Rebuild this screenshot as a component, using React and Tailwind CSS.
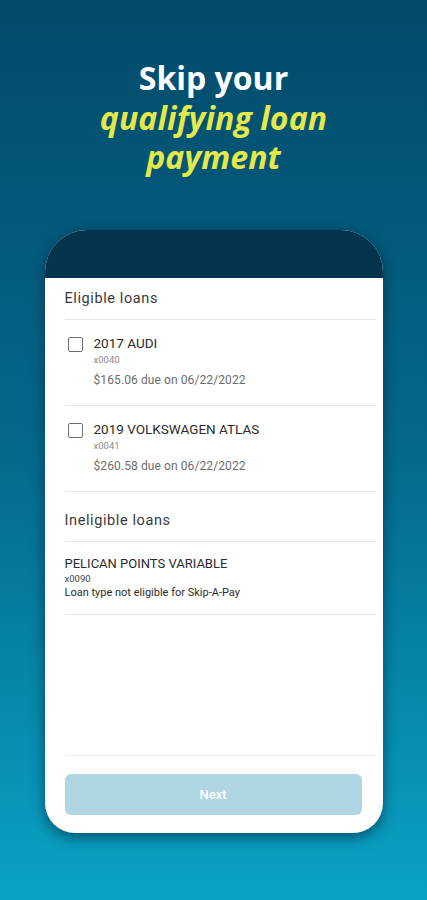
import React from "react";

const eligible = [
  { name: "2017 AUDI", acct: "x0040", due: "$165.06 due on 06/22/2022" },
  { name: "2019 VOLKSWAGEN ATLAS", acct: "x0041", due: "$260.58 due on 06/22/2022" },
];

const LoanRow = ({ loan }) => (
  <div className="flex border-b border-[#e6e6e6] pt-[15px] pb-[17px]">
    <div className="ml-[3px] mt-[2px] h-[15px] w-[15px] shrink-0 rounded-[2px] border-[1.5px] border-[#6f6f6f] bg-white" />
    <div className="ml-[11px] flex flex-col">
      <span className="text-[13.5px] leading-[16px] text-[#2b2b2b]">{loan.name}</span>
      <span className="mt-[3px] text-[9.5px] leading-[12px] text-[#8a8a8a]">{loan.acct}</span>
      <span className="mt-[6px] text-[12px] leading-[16px] tracking-[0.1px] text-[#6d6d6d]">{loan.due}</span>
    </div>
  </div>
);

export default function App() {
  return (
    <div className="flex h-[900px] w-[427px] flex-col items-center overflow-hidden bg-gradient-to-b from-[#034a6a] via-[#04698c] to-[#0aa3c6] font-['Roboto',sans-serif]">
      <div className="mt-[58px] flex flex-col items-center font-['Open_Sans',sans-serif] font-bold">
        <span className="text-[32px] leading-[40px] tracking-[0px] text-white">Skip your</span>
        <span className="text-[32px] italic leading-[40px] tracking-[0.1px] text-[#e4e84a]">qualifying loan</span>
        <span className="text-[32px] italic leading-[37px] tracking-[0.1px] text-[#e4e84a]">payment</span>
      </div>

      <div className="mt-[55px] flex w-[338px] flex-col overflow-hidden rounded-t-[42px] rounded-b-[30px] bg-white shadow-[0_4px_14px_rgba(0,20,40,0.55)]">
        <div className="h-[48px] bg-[#04344d]" />
        <div className="flex h-[555px] flex-col pl-[20px] pr-[7px]">
          <div className="border-b border-[#e6e6e6] pt-[12px] pb-[11px] text-[14.5px] leading-[18px] tracking-[0.6px] text-[#3a3a3a]">
            Eligible loans
          </div>
          {eligible.map((loan) => (
            <LoanRow key={loan.acct} loan={loan} />
          ))}
          <div className="border-b border-[#e6e6e6] pt-[20px] pb-[11px] text-[14.5px] leading-[18px] tracking-[0.6px] text-[#3a3a3a]">
            Ineligible loans
          </div>
          <div className="flex flex-col border-b border-[#e6e6e6] pt-[14px] pb-[14px]">
            <span className="text-[13px] leading-[16px] text-[#2b2b2b]">PELICAN POINTS VARIABLE</span>
            <span className="text-[9.5px] leading-[13px] text-[#444]">x0090</span>
            <span className="text-[11px] leading-[15px] text-[#2b2b2b]">Loan type not eligible for Skip-A-Pay</span>
          </div>
          <div className="flex-1 border-b border-[#eeeeee]" />
          <div className="pt-[18px] pb-[18px] pr-[14px]">
            <button className="h-[41px] w-full rounded-[6px] bg-[#b1d6e3] text-[13px] font-medium text-white">
              Next
            </button>
          </div>
        </div>
      </div>
    </div>
  );
}
